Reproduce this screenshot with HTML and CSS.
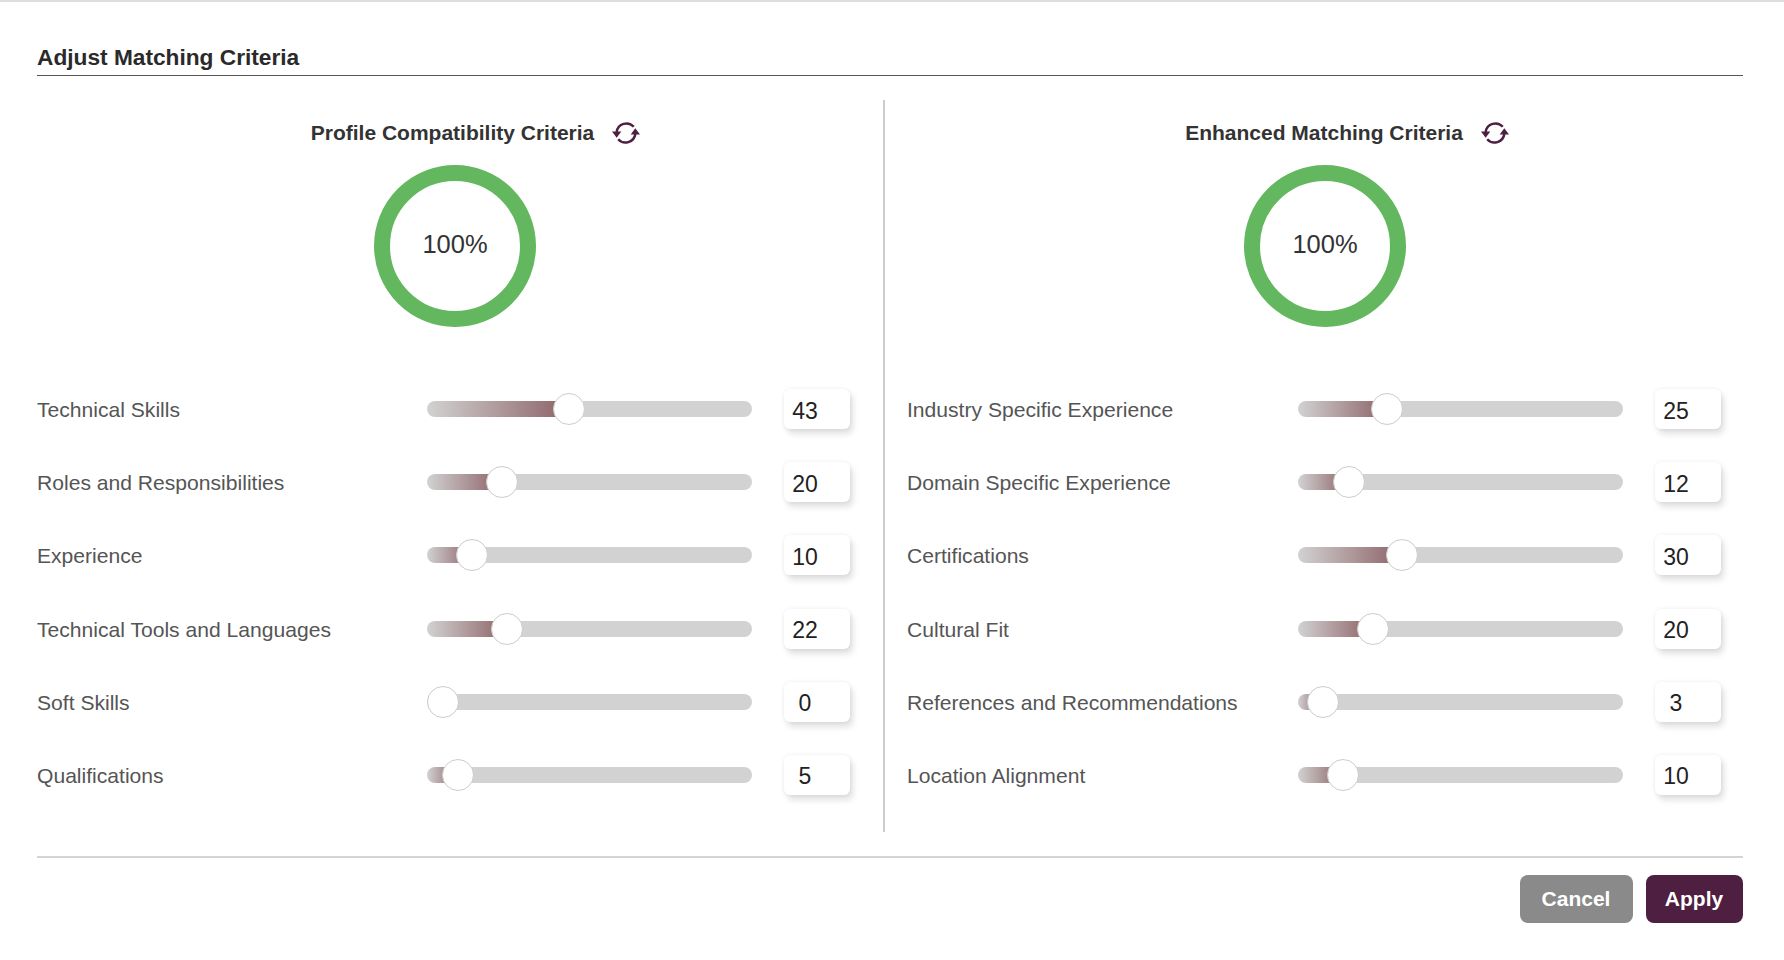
FILE: index.html
```html
<!DOCTYPE html>
<html lang="en">
<head>
  <meta charset="UTF-8" />
  <title>Adjust Matching Criteria</title>
  <link rel="stylesheet" href="styles.css">
</head>
<body>
  <div class="modal">
    <h1 class="modal-title">Adjust Matching Criteria</h1>

    <div class="columns">
      <section class="col col-left">
        <div class="col-head">
          <h2>Profile Compatibility Criteria</h2>
          <svg class="refresh" viewBox="0 0 27 21">
            <path d="M4.5 9.5a9.5 9.5 0 0 1 16.5-5" />
            <path d="M22.5 11.5a9.5 9.5 0 0 1-16.5 5" />
            <polygon points="0,9 9,9 4.5,15" />
            <polygon points="27,12 18,12 22.5,6" />
          </svg>
        </div>
        <div class="donut"><span>100%</span></div>
        <div class="rows">
          <div class="row"><label>Technical Skills</label><input class="slider" type="range" value="43" style="--v:43"><input class="num" type="text" value="43"></div>
          <div class="row"><label>Roles and Responsibilities</label><input class="slider" type="range" value="20" style="--v:20"><input class="num" type="text" value="20"></div>
          <div class="row"><label>Experience</label><input class="slider" type="range" value="10" style="--v:10"><input class="num" type="text" value="10"></div>
          <div class="row"><label>Technical Tools and Languages</label><input class="slider" type="range" value="22" style="--v:22"><input class="num" type="text" value="22"></div>
          <div class="row"><label>Soft Skills</label><input class="slider" type="range" value="0" style="--v:0"><input class="num" type="text" value="0"></div>
          <div class="row"><label>Qualifications</label><input class="slider" type="range" value="5" style="--v:5"><input class="num" type="text" value="5"></div>
        </div>
      </section>

      <section class="col col-right">
        <div class="col-head">
          <h2>Enhanced Matching Criteria</h2>
          <svg class="refresh" viewBox="0 0 27 21">
            <path d="M4.5 9.5a9.5 9.5 0 0 1 16.5-5" />
            <path d="M22.5 11.5a9.5 9.5 0 0 1-16.5 5" />
            <polygon points="0,9 9,9 4.5,15" />
            <polygon points="27,12 18,12 22.5,6" />
          </svg>
        </div>
        <div class="donut"><span>100%</span></div>
        <div class="rows">
          <div class="row"><label>Industry Specific Experience</label><input class="slider" type="range" value="25" style="--v:25"><input class="num" type="text" value="25"></div>
          <div class="row"><label>Domain Specific Experience</label><input class="slider" type="range" value="12" style="--v:12"><input class="num" type="text" value="12"></div>
          <div class="row"><label>Certifications</label><input class="slider" type="range" value="30" style="--v:30"><input class="num" type="text" value="30"></div>
          <div class="row"><label>Cultural Fit</label><input class="slider" type="range" value="20" style="--v:20"><input class="num" type="text" value="20"></div>
          <div class="row"><label>References and Recommendations</label><input class="slider" type="range" value="3" style="--v:3"><input class="num" type="text" value="3"></div>
          <div class="row"><label>Location Alignment</label><input class="slider" type="range" value="10" style="--v:10"><input class="num" type="text" value="10"></div>
        </div>
      </section>
    </div>

    <div class="modal-foot">
      <button class="btn btn-cancel">Cancel</button>
      <button class="btn btn-apply">Apply</button>
    </div>
  </div>
</body>
</html>
```

FILE: styles.css
```css
:root {
  --plum: #4e1f41;
  --track: #d2d2d2;
}
* {
  box-sizing: border-box;
}
html, body {
  height: 100%;
}
body {
  margin: 0;
  background-color: #fff;
  font-family: "Liberation Sans", Arial, sans-serif;
  overflow: hidden;
}
.modal {
  height: 960px;
  padding: 42px 41.5px 0 37px;
  border-top: 2px solid #ddd;
}
.modal-title {
  margin: 0;
  height: 32px;
  font-size: 22.7px;
  line-height: 26px;
  font-weight: bold;
  color: #2a2a2a;
  border-bottom: 1px solid #555;
}
.columns {
  display: flex;
  margin-top: 24px;
  height: 732px;
}
.col {
  width: 836px;
  flex: none;
}
.col-left {
  width: 848px;
  padding-right: 10px;
  border-right: 2px solid #ccc;
}
.col-right {
  margin-left: 22px;
}
.col-head {
  display: flex;
  justify-content: center;
  align-items: center;
  gap: 18px;
  height: 28px;
  margin-top: 18.5px;
  padding-left: 41px;
}
.col-right .col-head {
  padding-left: 44px;
}
.col-head h2 {
  margin: 0;
  font-size: 21px;
  font-weight: bold;
  color: #333;
}
.refresh {
  width: 28px;
  height: 22px;
  flex: none;
  fill: var(--plum);
}
.refresh path {
  fill: none;
  stroke: var(--plum);
  stroke-width: 2.4;
}
.donut {
  width: 162px;
  height: 162px;
  margin: 18.5px auto 0;
  border: 16px solid #62b75f;
  border-radius: 50%;
  display: flex;
  justify-content: center;
  align-items: center;
  padding-bottom: 4px;
  font-size: 25.5px;
  color: #333;
}
.rows {
  display: flex;
  flex-direction: column;
  gap: 33.2px;
  margin-top: 62px;
}
.row {
  display: flex;
  align-items: center;
  height: 40px;
}
.row label {
  width: 390px;
  flex: none;
  padding-top: 2px;
  font-size: 21.1px;
  color: #555;
}
.col-right .row label {
  width: 391px;
}
.slider {
  -webkit-appearance: none;
  appearance: none;
  width: 325px;
  height: 16px;
  margin: 0;
  border-radius: 8px;
  background: linear-gradient(to right, #d2d2d2, #8c6266) 0 0 / calc(16px + (100% - 32px) * var(--v) / 100) 100% no-repeat, var(--track);
}
.slider::-webkit-slider-thumb {
  -webkit-appearance: none;
  width: 32px;
  height: 32px;
  border-radius: 50%;
  background: #fff;
  border: 1px solid #ccc;
}
.num {
  width: 66px;
  height: 40px;
  margin-left: 32px;
  padding: 4px 24px 0 0;
  border: none;
  border-radius: 6px;
  outline: none;
  background: #fff;
  box-shadow: 3px 5px 6px rgba(0,0,0,0.12), 0 0 4px rgba(0,0,0,0.07);
  text-align: center;
  font-family: inherit;
  font-size: 23px;
  color: #222;
}
.modal-foot {
  display: flex;
  justify-content: flex-end;
  gap: 13px;
  margin-top: 24px;
  padding-top: 17px;
  border-top: 2px solid #d4d4d4;
}
.btn {
  height: 48px;
  border: none;
  border-radius: 8px;
  color: #fff;
  font-family: inherit;
  font-size: 21px;
  font-weight: bold;
}
.btn-cancel {
  width: 113px;
  background-color: #8a8a8a;
}
.btn-apply {
  width: 97px;
  background-color: var(--plum);
}
```
